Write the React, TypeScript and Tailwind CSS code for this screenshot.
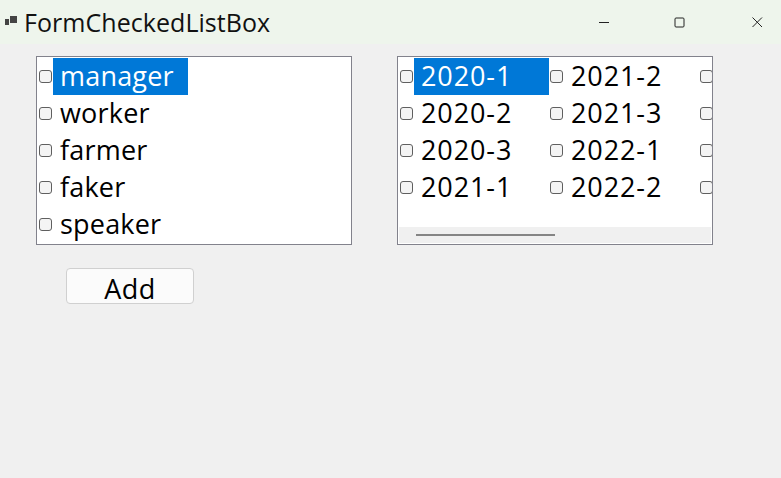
const font = "font-['Open_Sans','Noto_Sans',sans-serif]";

const people = ["manager", "worker", "farmer", "faker", "speaker"];
const periods = [
  ["2020-1", "2020-2", "2020-3", "2021-1"],
  ["2021-2", "2021-3", "2022-1", "2022-2"],
  ["", "", "", ""],
];

function Row({ label, selected, digits }: { label: string; selected?: boolean; digits?: boolean }) {
  return (
    <div className="flex h-[37px] items-center">
      <span className="ml-[2px] h-[13px] w-[13px] shrink-0 rounded-[3px] border border-[#5f5f5f] bg-[#f4f4f4]" />
      <span
        className={`ml-[1px] h-[37px] shrink-0 pl-[7px] text-[27px] leading-[36px] whitespace-nowrap ${
          digits ? "tracking-[0.9px]" : "tracking-[0.2px]"
        } ${selected ? "w-[135px] bg-[#0078d7] text-white" : "text-black"}`}
      >
        {label}
      </span>
    </div>
  );
}

export default function App() {
  return (
    <div className={`flex h-[478px] w-[781px] flex-col overflow-hidden bg-[#f0f0f0] ${font}`}>
      {/* title bar */}
      <div className="flex h-[44px] shrink-0 items-center bg-[#eef5ec] pl-[5px]">
        <svg width="13" height="11" viewBox="0 0 13 11" className="mb-[2px]">
          <rect x="0" y="3" width="4" height="6" fill="#444" />
          <rect x="5" y="0" width="7" height="7" fill="#444" />
        </svg>
        <span className="ml-[6px] text-[25px] leading-none tracking-[0.05px] text-[#111]">FormCheckedListBox</span>
        <div className="ml-auto flex items-center text-black">
          <svg width="12" height="12" viewBox="0 0 12 12" className="mr-[64px]">
            <path d="M1 6.5h10" stroke="#222" strokeWidth="1" />
          </svg>
          <svg width="11" height="11" viewBox="0 0 11 11" className="mr-[66px]">
            <rect x="1" y="1" width="9" height="9" rx="1" fill="none" stroke="#222" strokeWidth="1" />
          </svg>
          <svg width="12" height="12" viewBox="0 0 12 12" className="mr-[18px]">
            <path d="M1.5 1.5l9.5 9.5M11 1.5l-9.5 9.5" stroke="#222" strokeWidth="1" />
          </svg>
        </div>
      </div>

      {/* lists */}
      <div className="flex gap-[45px] pt-[12px] pl-[36px]">
        <div className="h-[189px] w-[316px] border border-[#82828c] bg-white pt-[1px]">
          {people.map((p, i) => (
            <Row key={p} label={p} selected={i === 0} />
          ))}
        </div>

        <div className="flex h-[189px] w-[316px] flex-col border border-[#82828c] bg-white pt-[1px]">
          <div className="flex h-[169px] overflow-hidden pr-[1px]">
            {periods.map((col, c) => (
              <div key={c} className="w-[150px] shrink-0">
                {col.map((p, i) => (
                  <Row key={i} label={p} digits selected={c === 0 && i === 0} />
                ))}
              </div>
            ))}
          </div>
          <div className="mx-[1px] flex h-[16px] items-start bg-[#f0f0f0] pt-[7px] pl-[17px]">
            <div className="h-[2px] w-[139px] bg-[#858585]" />
          </div>
        </div>
      </div>

      {/* button */}
      <button className="mt-[23px] ml-[66px] h-[36px] w-[128px] rounded-[4px] border border-[#d0d0d0] bg-[#fbfbfb] pt-[2px] text-[27px] leading-[36px] tracking-[0.4px] text-black">
        Add
      </button>
    </div>
  );
}
